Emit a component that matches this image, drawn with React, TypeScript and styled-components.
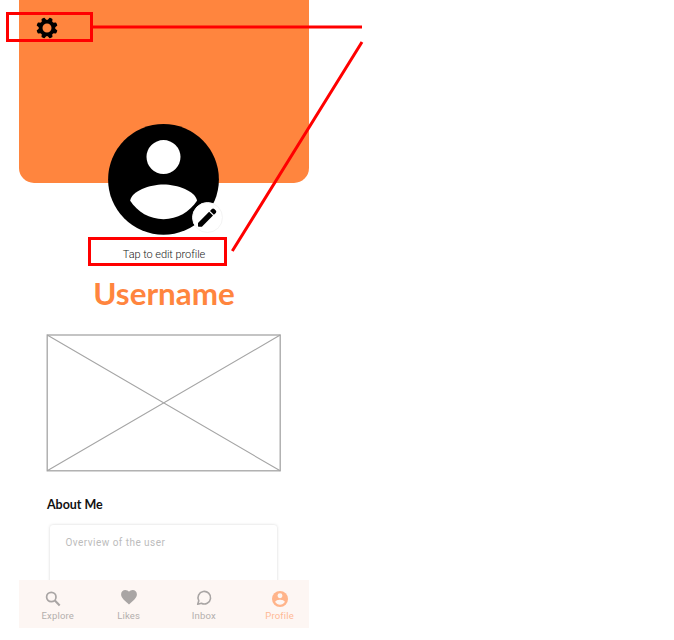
import React from "react";
import styled, { createGlobalStyle } from "styled-components";

const GlobalStyle = createGlobalStyle`
  * { box-sizing: border-box; }
  body { margin: 0; background: #fff; }
`;

const Page = styled.div`
  position: relative;
  width: 674px;
  height: 640px;
  padding-left: 19px;
  overflow: hidden;
  background: #fff;
`;

const Phone = styled.main`
  display: flex;
  flex-direction: column;
  width: 290px;
  height: 628px;
  overflow: hidden;
`;

const Banner = styled.header`
  flex: none;
  height: 183px;
  padding: 17px 0 0 17px;
  border-radius: 0 0 15px 15px;
  background: #ff853e;
  svg { display: block; }
`;

const Identity = styled.section`
  flex: none;
  display: flex;
  flex-direction: column;
  align-items: center;
  height: 151px;
  margin-top: -59px;
`;

const Avatar = styled.div`
  position: relative;
  width: 111px;
  height: 111px;
  margin-right: 1px;
  > svg { display: block; }
`;

const EditBadge = styled.button`
  position: absolute;
  left: 84px;
  top: 78px;
  width: 31px;
  height: 31px;
  padding: 0;
  border: 1px solid #f4f4f4;
  border-radius: 50%;
  background: #fff;
  svg { display: block; }
`;

const Hint = styled.p`
  margin: 12px 0 0;
  font: 300 11px/15px Roboto, sans-serif;
  letter-spacing: -0.06px;
  color: #222;
`;

const Username = styled.h1`
  margin: 12px 0 0;
  font: 700 31.4px/38px Lato, sans-serif;
  color: #ff853e;
`;

const Placeholder = styled.svg`
  flex: none;
  display: block;
  width: 235px;
  height: 138px;
  margin: 59px 0 0 27px;
`;

const About = styled.section`
  flex: 1;
  min-height: 0;
  overflow: hidden;
  padding: 25px 32px 0 31px;
`;

const AboutTitle = styled.h2`
  margin: 0 0 12px -3px;
  font: 700 12.5px/16px Lato, sans-serif;
  letter-spacing: -0.05px;
  color: #111;
`;

const Card = styled.div`
  height: 90px;
  padding: 11px 0 0 15.5px;
  border-radius: 3px;
  background: #fff;
  box-shadow: 0 0 3px rgba(0, 0, 0, 0.17);
  font: 400 10px/14px Roboto, sans-serif;
  letter-spacing: 0.46px;
  color: #bcbcbc;
`;

const Nav = styled.nav`
  flex: none;
  display: flex;
  justify-content: space-between;
  height: 48px;
  padding: 9px 15px 0 22.5px;
  background: #fdf6f3;
`;

const NavItem = styled.a<{ $active?: boolean; $nudge?: number; $shift?: number }>`
  display: flex;
  flex-direction: column;
  align-items: center;
  margin: 0 ${(p) => p.$shift ?? 0}px 0 ${(p) => -(p.$shift ?? 0)}px;
  color: ${(p) => (p.$active ? "#ffb48a" : "#a9a5a4")};
  font: 400 9.5px/12px Roboto, sans-serif;
  letter-spacing: 0.17px;
  svg {
    display: block;
    margin: 0 0 2px ${(p) => p.$nudge ?? 0}px;
  }
  span { color: ${(p) => (p.$active ? "#ffb995" : "#b3afad")}; }
`;

const Annotations = styled.svg`
  position: absolute;
  inset: 0;
  pointer-events: none;
`;

const teeth = [22.5, 67.5, 112.5, 157.5, 202.5, 247.5, 292.5, 337.5];

const Gear = () => (
  <svg width="22" height="22" viewBox="-11 -11 22 22">
    <circle r="6.4" fill="none" stroke="#000" strokeWidth="3.8" />
    {teeth.map((a) => (
      <path
        key={a}
        d="M-2.6-7.2 L-1.7-10.2 Q-1.6-10.6-1.1-10.6 H1.1 Q1.6-10.6 1.7-10.2 L2.6-7.2Z"
        transform={`rotate(${a})`}
      />
    ))}
  </svg>
);

const Pencil = () => (
  <svg width="29" height="29" viewBox="0 0 29 29">
    <path d="M5 19.9 L16.1 8.8 L20 12.6 L8.9 23.7 H5.6 Q5 23.7 5 23.1Z M17 7.9 L18.9 6 Q20.1 4.9 21.3 6 L22.8 7.5 Q23.9 8.7 22.8 9.9 L20.9 11.8Z" />
  </svg>
);

const Person = () => (
  <svg width="111" height="111" viewBox="0 0 111 111">
    <circle cx="55.5" cy="55.4" r="55.4" />
    <circle cx="55.5" cy="33.1" r="17" fill="#fff" />
    <path fill="#fff" d="M22.2 76.8 C23 67 42 60.4 55.5 60.4 S88 67 89 76.8 C81.5 88 69.5 95.2 55.5 95.2 S29.5 88 22.2 76.8Z" />
  </svg>
);

const SearchIcon = () => (
  <svg width="20" height="19" viewBox="0 0 20 19" fill="none" stroke="currentColor">
    <circle cx="8.3" cy="8" r="4.7" strokeWidth="1.7" />
    <path d="M11.6 11.3 L16.7 16.4" strokeWidth="2.1" />
  </svg>
);

const HeartIcon = () => (
  <svg width="20" height="19" viewBox="0 0 20 19" fill="currentColor">
    <path d="M10 15.5 L8.7 14.3 C4.5 10.5 2.1 8.4 2.1 5.2 C2.1 2.8 4 1 6.3 1 C7.8 1 9.2 1.7 10 2.8 C10.8 1.7 12.2 1 13.7 1 C16 1 17.9 2.8 17.9 5.2 C17.9 8.4 15.5 10.5 11.3 14.3Z" />
  </svg>
);

const ChatIcon = () => (
  <svg width="20" height="19" viewBox="0 0 20 19" fill="none" stroke="currentColor" strokeWidth="1.6" strokeLinejoin="round">
    <path d="M3.7 15.3 L4.8 11.8 A6.3 6.3 0 1 1 7.4 14.3Z" />
  </svg>
);

const ProfileIcon = () => (
  <svg width="20" height="19" viewBox="0 0 20 19">
    <circle cx="10" cy="10" r="8" fill="currentColor" />
    <circle cx="10" cy="6.8" r="2.45" fill="#fdf6f3" />
    <path fill="#fdf6f3" d="M5.2 13.1 C5.3 11.4 8.2 10.7 10 10.7 S14.7 11.4 14.8 13.1 C13.7 14.8 12 15.7 10 15.7 S6.3 14.8 5.2 13.1Z" />
  </svg>
);

export default function App() {
  return (
    <>
      <GlobalStyle />
      <Page>
        <Phone>
          <Banner><Gear /></Banner>
          <Identity>
            <Avatar>
              <Person />
              <EditBadge aria-label="Edit"><Pencil /></EditBadge>
            </Avatar>
            <Hint>Tap to edit profile</Hint>
            <Username>Username</Username>
          </Identity>
          <Placeholder viewBox="0 0 235 138" fill="none" stroke="#a5a5a5">
            <rect x="1.2" y="1" width="233" height="135.8" strokeWidth="1.3" />
            <path d="M1.2 1 L234.2 136.8 M234.2 1 L1.2 136.8" strokeWidth="1.1" />
          </Placeholder>
          <About>
            <AboutTitle>About Me</AboutTitle>
            <Card>Overview of the user</Card>
          </About>
          <Nav>
            <NavItem $nudge={-10}><SearchIcon /><span>Explore</span></NavItem>
            <NavItem $shift={5}><HeartIcon /><span>Likes</span></NavItem>
            <NavItem $shift={1.4}><ChatIcon /><span>Inbox</span></NavItem>
            <NavItem $active><ProfileIcon /><span>Profile</span></NavItem>
          </Nav>
        </Phone>
        <Annotations width="674" height="640" fill="none" stroke="#f00" strokeWidth="3">
          <rect x="7.5" y="13.5" width="84" height="27" />
          <rect x="89.5" y="238.5" width="136" height="26" />
          <path d="M93 27 H362 M232.3 251 L362 42" />
        </Annotations>
      </Page>
    </>
  );
}
